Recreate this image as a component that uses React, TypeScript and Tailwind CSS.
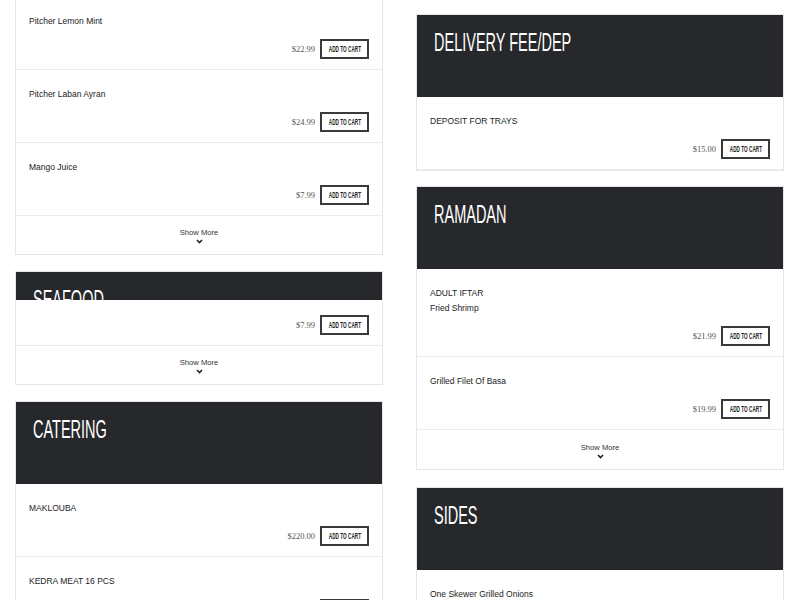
import React from "react";

const SANS = { fontFamily: '"Liberation Sans", Arial, sans-serif' };
const SERIF = { fontFamily: '"Liberation Serif", "Times New Roman", serif' };

function AddButton() {
  return (
    <div className="w-[49px] h-[20px] border-2 border-[#3a3a3a] bg-white flex items-center justify-center overflow-hidden">
      <span
        className="inline-block text-[9px] font-bold text-[#222] leading-none whitespace-nowrap scale-x-[0.52]"
        style={SANS}
      >
        ADD TO CART
      </span>
    </div>
  );
}

function Row({ names, price, topPad = 18 }: { names: string[]; price: string; topPad?: number }) {
  return (
    <div className="border-b border-[#ececec] px-[13px] pb-[10px]" style={{ paddingTop: topPad }}>
      {names.length > 0 && (
        <div className="flex flex-col gap-[3px]">
          {names.map((n) => (
            <div key={n} className="text-[8.5px] leading-[12px] text-[#222]" style={SANS}>
              {n}
            </div>
          ))}
        </div>
      )}
      <div className={`flex justify-end items-center gap-[5px] ${names.length > 0 ? "mt-[12px]" : ""}`}>
        <span className="text-[8.5px] text-[#555]" style={SERIF}>
          {price}
        </span>
        <AddButton />
      </div>
    </div>
  );
}

function ShowMore() {
  return (
    <div className="h-[38px] flex flex-col items-center pt-[11px]">
      <div className="text-[7.6px] leading-[11px] text-[#333]" style={SANS}>
        Show More
      </div>
      <svg width="7" height="5" viewBox="0 0 7 5" className="mt-[1px]">
        <polyline points="1,1 3.5,3.5 6,1" fill="none" stroke="#222" strokeWidth="1.6" />
      </svg>
    </div>
  );
}

function Header({ title, h = 82 }: { title: string; h?: number }) {
  return (
    <div className="bg-[#26282b] overflow-hidden px-[17px] pt-[14px]" style={{ height: h }}>
      <span
        className="inline-block origin-left scale-x-[0.58] text-[25px] leading-[26px] text-white whitespace-nowrap"
        style={SANS}
      >
        {title}
      </span>
    </div>
  );
}

function Card({ children, className = "" }: { children: React.ReactNode; className?: string }) {
  return <div className={`border border-[#e6e6e6] bg-white ${className}`}>{children}</div>;
}

export default function App() {
  return (
    <div className="w-[800px] h-[600px] overflow-hidden bg-white grid grid-cols-[368px_368px] gap-x-[33px] pl-[15px]">
      {/* Left column */}
      <div className="flex flex-col gap-[16px] mt-[-4px]">
        <Card>
          <Row names={["Pitcher Lemon Mint"]} price="$22.99" />
          <Row names={["Pitcher Laban Ayran"]} price="$24.99" />
          <Row names={["Mango Juice"]} price="$7.99" />
          <ShowMore />
        </Card>
        <Card>
          <Header title="SEAFOOD" h={28} />
          <Row names={[]} price="$7.99" topPad={15} />
          <ShowMore />
        </Card>
        <Card>
          <Header title="CATERING" />
          <Row names={["MAKLOUBA"]} price="$220.00" />
          <Row names={["KEDRA MEAT 16 PCS"]} price="$180.00" />
        </Card>
      </div>
      {/* Right column */}
      <div className="flex flex-col pt-[14px]">
        <Card>
          <Header title="DELIVERY FEE/DEP" />
          <Row names={["DEPOSIT FOR TRAYS"]} price="$15.00" />
        </Card>
        <Card className="mt-[15px]">
          <Header title="RAMADAN" />
          <Row names={["ADULT IFTAR", "Fried Shrimp"]} price="$21.99" />
          <Row names={["Grilled Filet Of Basa"]} price="$19.99" />
          <div className="h-[1px]" />
          <ShowMore />
        </Card>
        <Card className="mt-[17px]">
          <Header title="SIDES" />
          <Row names={["One Skewer Grilled Onions"]} price="$2.99" />
        </Card>
      </div>
    </div>
  );
}
